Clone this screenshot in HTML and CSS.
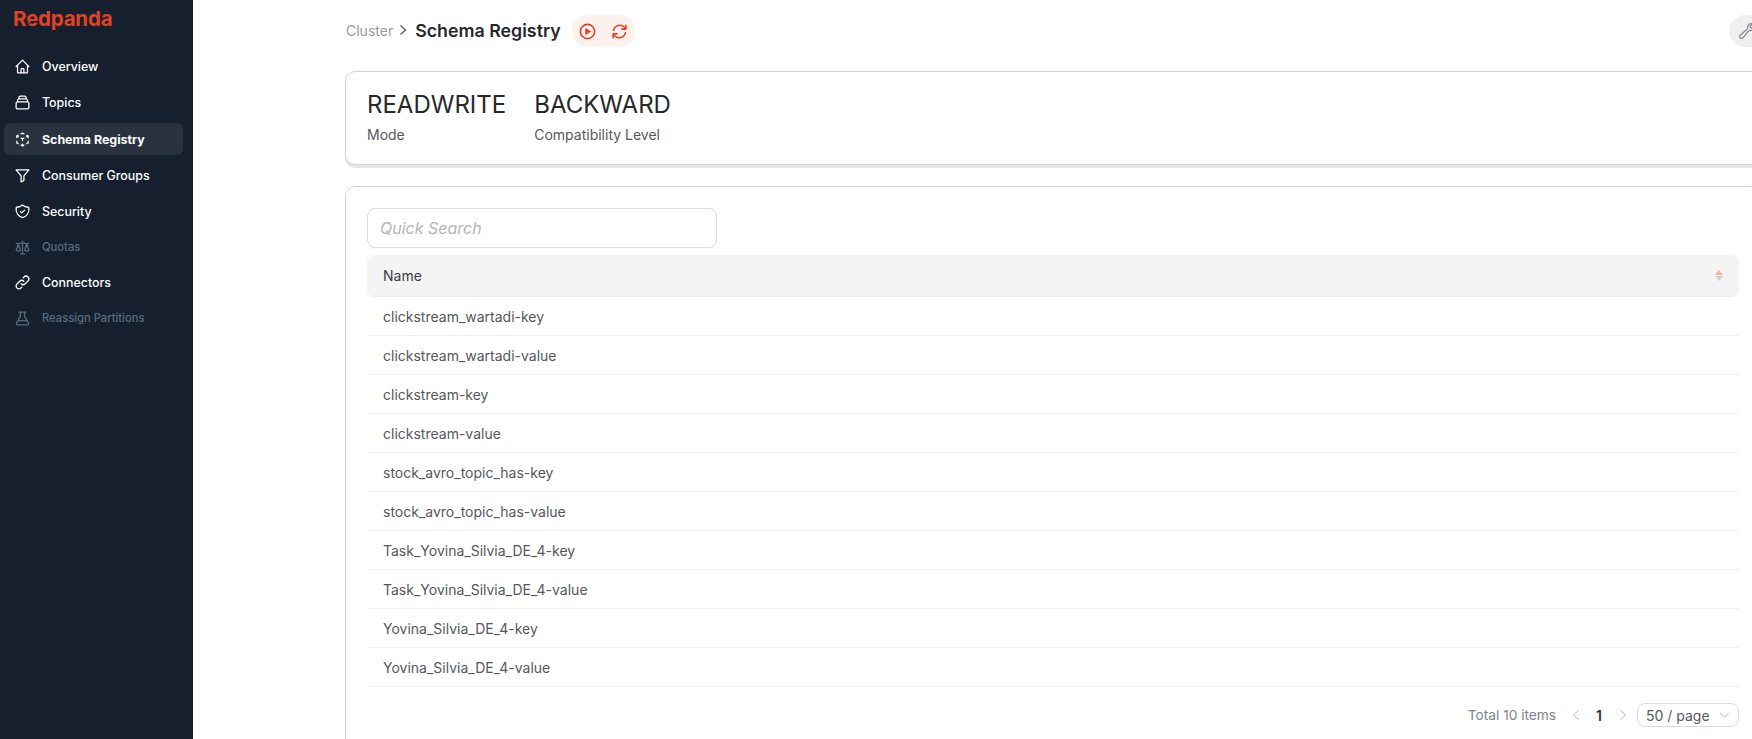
FILE: index.html
```html
<!DOCTYPE html>
<html lang="en">
<head>
<meta charset="utf-8">
<title>Schema Registry</title>
<link rel="stylesheet" href="styles.css">
</head>
<body>
<div class="app">
  <aside class="sidebar">
    <div class="logo"><span class="logo-text">Redpanda</span><svg class="logo-mark" viewBox="0 0 8 6"><path d="M1 2l4 -1.4M2 4l4 -1.4M3 5.8l4 -1.4" stroke="#151f2e" stroke-width="1" fill="none"/></svg></div>
    <nav class="nav">
      <a class="nav-item"><svg class="ico" viewBox="0 0 24 24"><path d="M3 12l2-2m0 0l7-7 7 7M5 10v10a1 1 0 001 1h3m10-11l2 2m-2-2v10a1 1 0 01-1 1h-3m-6 0a1 1 0 001-1v-4a1 1 0 011-1h2a1 1 0 011 1v4a1 1 0 001 1m-6 0h6"/></svg><span>Overview</span></a>
      <a class="nav-item"><svg class="ico" viewBox="0 0 24 24"><path d="M19 11H5m14 0a2 2 0 012 2v6a2 2 0 01-2 2H5a2 2 0 01-2-2v-6a2 2 0 012-2m14 0V9a2 2 0 00-2-2M5 11V9a2 2 0 012-2m0 0V5a2 2 0 012-2h6a2 2 0 012 2v2M7 7h10"/></svg><span>Topics</span></a>
      <a class="nav-item active"><svg class="ico" viewBox="0 0 24 24"><path d="M14 10l-2 1m0 0l-2-1m2 1v2.5M20 7l-2 1m2-1l-2-1m2 1v2.5M14 4l-2-1-2 1M4 7l2-1M4 7l2 1M4 7v2.5M12 21l-2-1m2 1l2-1m-2 1v-2.5M6 18l-2-1v-2.5M18 18l2-1v-2.5"/></svg><span>Schema Registry</span></a>
      <a class="nav-item"><svg class="ico" viewBox="0 0 24 24"><path d="M3 4h18l-7 8.500V19l-4 2v-8.500z"/></svg><span>Consumer Groups</span></a>
      <a class="nav-item"><svg class="ico" viewBox="0 0 24 24"><path d="M9 12l2 2 4-4m5.618-4.016A11.955 11.955 0 0112 2.944a11.955 11.955 0 01-8.618 3.04A12.02 12.02 0 003 9c0 5.591 3.824 10.29 9 11.622 5.176-1.332 9-6.03 9-11.622 0-1.042-.133-2.052-.382-3.016z"/></svg><span>Security</span></a>
      <a class="nav-item muted"><svg class="ico" viewBox="0 0 24 24"><path d="M3 6l3 1m0 0l-3 9a5.002 5.002 0 006.001 0M6 7l3 9M6 7l6-2m6 2l3-1m-3 1l-3 9a5.002 5.002 0 006.001 0M18 7l3 9m-3-9l-6-2m0-2v2m0 16V5m0 16H9m3 0h3"/></svg><span>Quotas</span></a>
      <a class="nav-item"><svg class="ico" viewBox="0 0 24 24"><path d="M13.828 10.172a4 4 0 00-5.656 0l-4 4a4 4 0 105.656 5.656l1.102-1.101m-.758-4.899a4 4 0 005.656 0l4-4a4 4 0 00-5.656-5.656l-1.1 1.1"/></svg><span>Connectors</span></a>
      <a class="nav-item muted"><svg class="ico" viewBox="0 0 24 24"><path d="M7 3h10M9 3v6L3.500 18.500A1.700 1.700 0 005 21h14a1.700 1.700 0 001.500-2.500L15 9V3M6 15h12"/></svg><span>Reassign Partitions</span></a>
    </nav>
  </aside>
  <main class="main">
    <header class="topbar">
      <div class="crumbs">
        <span class="crumb">Cluster</span>
        <svg class="crumb-sep" viewBox="0 0 10 12"><path d="M2.500 1.500L7.500 6l-5 4.500"/></svg>
        <h1 class="title">Schema Registry</h1>
        <div class="actions">
          <svg class="act" viewBox="0 0 24 24"><path d="M21 12a9 9 0 11-18 0 9 9 0 0118 0z"/><path class="fill" d="M10 8.500l6 3.500-6 3.500z"/></svg>
          <svg class="act" viewBox="0 0 24 24"><path d="M4.500 10.500A8 8 0 0118.500 7l1.500 2M20 4v5h-5M19.500 13.500A8 8 0 015.500 17L4 15M4 20v-5h5"/></svg>
        </div>
      </div>
      <button class="tool"><svg viewBox="0 0 24 24"><path d="M21.750 6.750a4.500 4.500 0 01-4.884 4.484c-1.076-.091-2.264.071-2.950.904l-7.152 8.684a2.548 2.548 0 11-3.586-3.586l8.684-7.152c.833-.686.995-1.874.904-2.950a4.500 4.500 0 016.336-4.486l-3.276 3.276a3.004 3.004 0 002.250 2.250l3.276-3.276c.256.565.398 1.192.398 1.852z"/></svg></button>
    </header>
    <section class="card stats">
      <div class="stat"><div class="stat-value">READWRITE</div><div class="stat-label">Mode</div></div>
      <div class="stat"><div class="stat-value">BACKWARD</div><div class="stat-label">Compatibility Level</div></div>
    </section>
    <section class="card list">
      <div class="search">Quick Search</div>
      <div class="thead"><span>Name</span><span class="sorter"><i class="up"></i><i class="down"></i></span></div>
      <div class="row">clickstream_wartadi-key</div>
      <div class="row">clickstream_wartadi-value</div>
      <div class="row">clickstream-key</div>
      <div class="row">clickstream-value</div>
      <div class="row">stock_avro_topic_has-key</div>
      <div class="row">stock_avro_topic_has-value</div>
      <div class="row">Task_Yovina_Silvia_DE_4-key</div>
      <div class="row">Task_Yovina_Silvia_DE_4-value</div>
      <div class="row">Yovina_Silvia_DE_4-key</div>
      <div class="row">Yovina_Silvia_DE_4-value</div>
      <div class="pager">
        <span class="total">Total 10 items</span>
        <svg class="pg-arrow" viewBox="0 0 10 12"><path d="M7.500 1.500L2.500 6l5 4.500"/></svg>
        <span class="pg-num">1</span>
        <svg class="pg-arrow" viewBox="0 0 10 12"><path d="M2.500 1.500L7.500 6l-5 4.500"/></svg>
        <span class="pg-size">50 / page<svg viewBox="0 0 12 8"><path d="M1 1.500l5 5 5-5"/></svg></span>
      </div>
    </section>
  </main>
</div>
</body>
</html>
```
FILE: styles.css
```css
* { box-sizing: border-box; }
html, body { margin: 0; height: 739px; overflow: hidden; background: #fff; }
body { font-family: Inter, "Liberation Sans", sans-serif; color: #2b2f36; }
.app { display: flex; height: 739px; width: 100vw; overflow: hidden; }

.sidebar { width: 193px; height: 739px; flex: none; background: #151f2e; padding: 0 10px 0 4px; }
.logo { position: relative; height: 50px; padding: 4px 0 0 9px; }
.logo-text { font-size: 20.5px; font-weight: 700; line-height: 30px; color: #e14225; letter-spacing: -0.2px; }
.logo-mark { position: absolute; left: 19px; top: 19px; width: 8px; height: 6px; }
.nav { display: flex; flex-direction: column; gap: 4px; }
.nav-item { display: flex; align-items: center; gap: 11px; height: 32px; padding-left: 10px; border-radius: 6px; color: #fff; font-size: 12.4px; font-weight: 500; }
.nav-item.active { background: #2a3240; font-weight: 700; }
.nav-item.muted { color: #5a6b80; font-size: 11.2px; }
.nav-item:nth-child(n+3):nth-child(-n+6) { position: relative; top: 1px; }
.ico { width: 17px; height: 17px; flex: none; fill: none; stroke: currentColor; stroke-width: 1.8; stroke-linecap: round; stroke-linejoin: round; }

.main { flex: none; width: 1577px; height: 739px; overflow: hidden; padding-left: 152px; }
.topbar { height: 62px; padding-top: 15px; display: flex; justify-content: space-between; align-items: flex-start; margin-bottom: 9px; }
.crumbs { display: flex; align-items: center; height: 32px; position: relative; top: -1px; padding-left: 1px; }
.crumb { font-size: 14px; color: #9a9a9e; }
.crumb-sep { width: 10px; height: 12px; margin: 0 7px 0 5px; fill: none; stroke: #666; stroke-width: 1.5; }
.title { margin: 0; font-size: 17.8px; font-weight: 600; color: #27282c; }
.actions { display: flex; align-items: center; gap: 13px; height: 32px; margin-left: 11px; padding: 0 6px; background: #fdf1ed; border-radius: 16px; position: relative; top: 1px; }
.act { width: 19px; height: 19px; fill: none; stroke: #e14225; stroke-width: 2; stroke-linecap: round; stroke-linejoin: round; }
.act .fill { fill: #e14225; stroke-width: 1; }
.tool { margin: 0; padding: 0 0 0 9px; border: 0; background: #eeeff1; display: flex; align-items: center; justify-content: flex-start; flex: none; width: 41px; height: 32px; border-radius: 16px; }
.tool svg { width: 18px; height: 18px; flex: none; fill: none; stroke: #85878c; stroke-width: 1.6; }

.card { margin-right: 9px; background: #fff; border: 1px solid #d3d3da; border-radius: 10px; }
.stats { height: 94px; display: flex; gap: 28px; padding: 16px 21px; margin-bottom: 21px; box-shadow: 0 3px 0 #e6e6ea; }
.stat-value { font-size: 24px; line-height: 34px; color: #27282c; }
.stat-label { margin-top: 3px; font-size: 14px; line-height: 20px; color: #56585e; }

.list { padding: 21px 21px 0; height: 640px; }
.search { width: 350px; height: 40px; border: 1px solid #d9d9df; border-radius: 8px; padding: 0 12px; display: flex; align-items: center; font-size: 16px; font-style: italic; color: #b4b4b8; margin-bottom: 7px; }
.thead { height: 42px; display: flex; align-items: center; justify-content: space-between; padding: 0 16px; background: #f4f4f4; border-radius: 8px; border-bottom: 1px solid #ececec; font-size: 14px; font-weight: 400; color: #3a3c42; }
.sorter { display: flex; flex-direction: column; gap: 1px; }
.sorter i { display: block; width: 0; height: 0; border-left: 4px solid transparent; border-right: 4px solid transparent; }
.sorter .up { border-bottom: 5px solid #fbb09c; }
.sorter .down { border-top: 5px solid #cfcfcf; }
.row { height: 39px; display: flex; align-items: center; padding: 0 16px; border-bottom: 1px solid #efefef; font-size: 14px; color: #55575c; }
.pager { display: flex; align-items: center; justify-content: flex-end; height: 56px; font-size: 13.7px; }
.total { color: #808288; margin-right: 15px; }
.pg-arrow { width: 10px; height: 12px; fill: none; stroke: #b4b4b8; stroke-width: 1; }
.pg-num { font-weight: 600; color: #2b2f36; font-size: 14px; margin: 0 16px 0 15px; }
.pg-size { margin-left: 9px; width: 102px; height: 24px; border: 1px solid #d9d9df; border-radius: 8px; display: flex; align-items: center; justify-content: space-between; padding: 0 8px; font-size: 14px; color: #56585e; }
.pg-size svg { width: 11px; height: 8px; fill: none; stroke: #b4b4b8; stroke-width: 1; }
```
